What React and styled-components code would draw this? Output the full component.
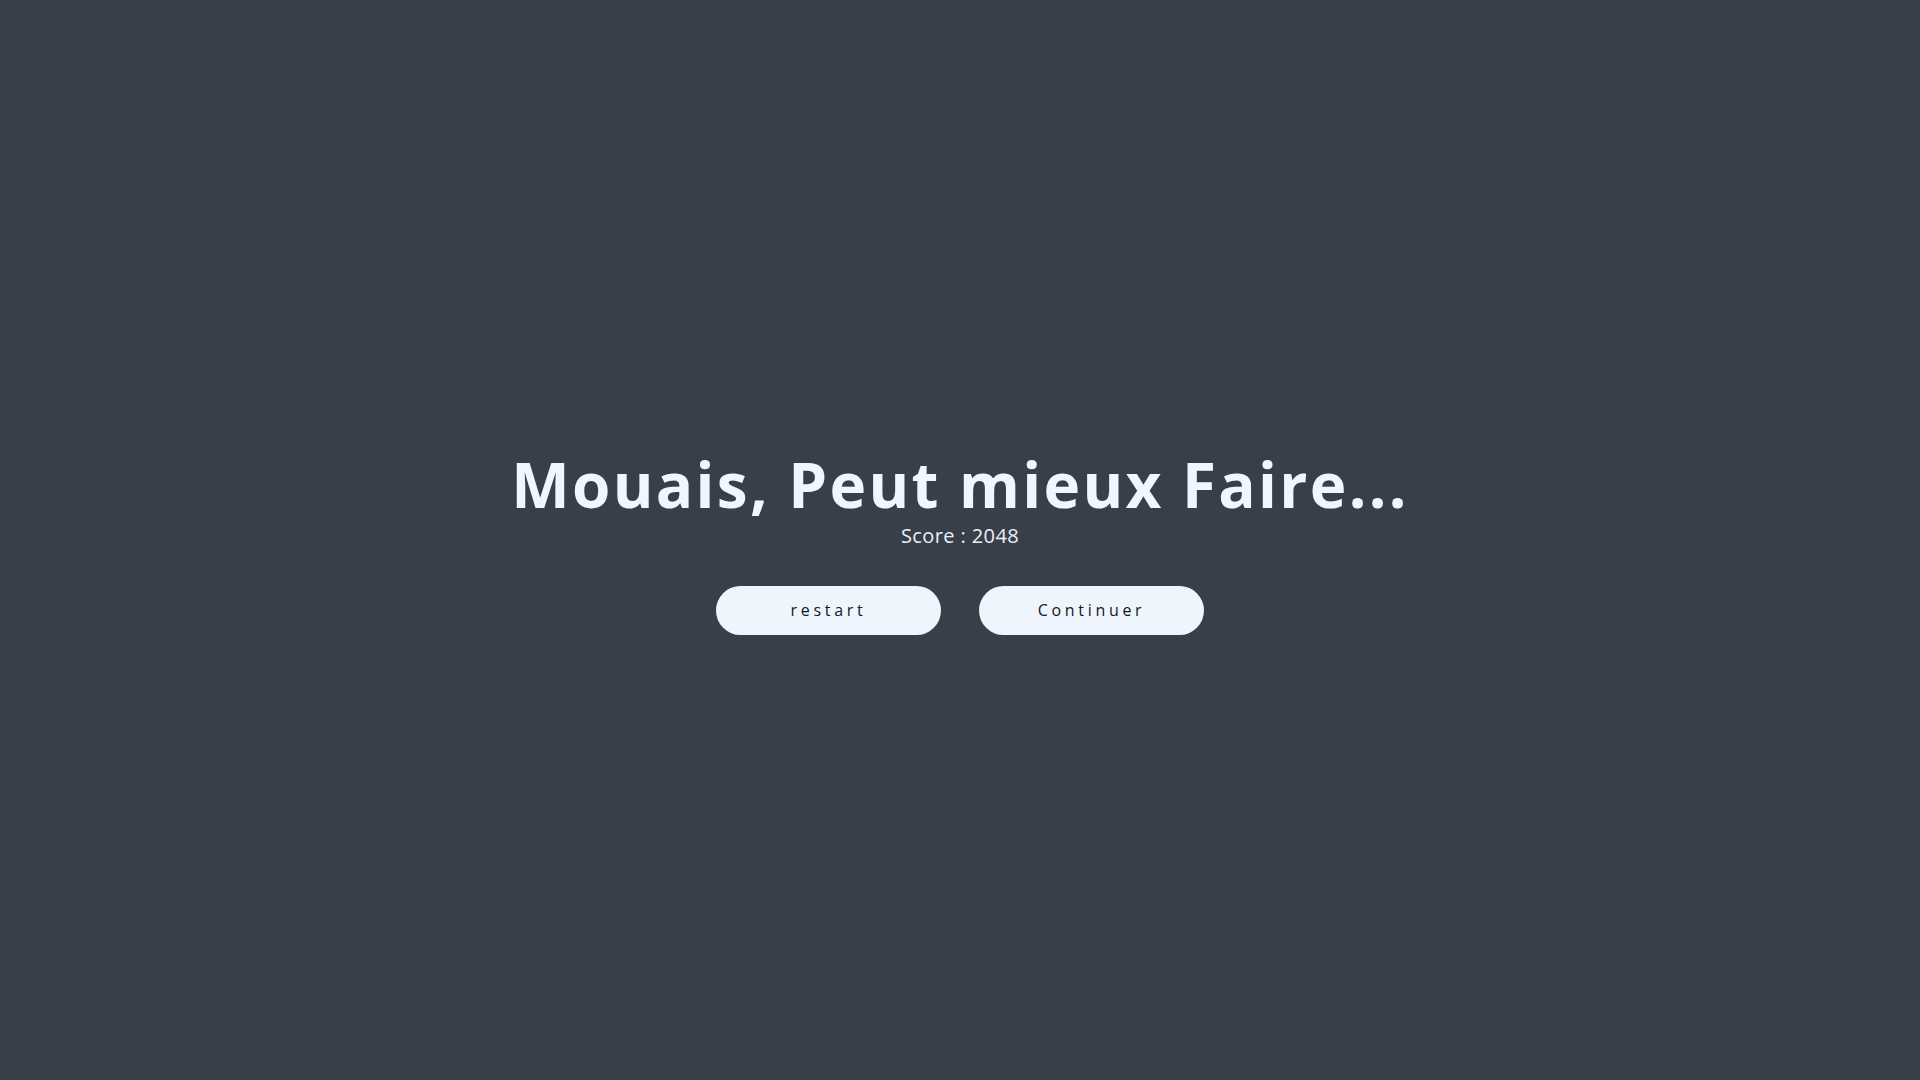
import React from 'react';
import styled, { createGlobalStyle } from 'styled-components';

const GlobalStyle = createGlobalStyle`
  html, body {
    margin: 0;
    padding: 0;
    background: #383f48;
  }
  body {
    font-family: "Open Sans", "DejaVu Sans", sans-serif;
  }
`;

const Screen = styled.div`
  min-height: 100vh;
  display: flex;
  flex-direction: column;
  align-items: center;
  justify-content: center;
  background: #383f48;
  color: #eff6ff;
`;

const Title = styled.h1`
  margin: 0;
  font-family: "Open Sans", sans-serif;
  font-weight: 700;
  font-size: 62px;
  line-height: 1.26;
  letter-spacing: 2.3px;
`;

const Score = styled.p`
  margin: 0;
  font-family: "Open Sans", sans-serif;
  font-weight: 400;
  font-size: 20px;
  line-height: 1.2;
  letter-spacing: 0.4px;
  color: #e9f0f8;
`;

const Actions = styled.div`
  display: flex;
  gap: 38px;
  margin-top: 38px;
`;

const Button = styled.button`
  width: 225px;
  height: 49px;
  border: none;
  border-radius: 25px;
  background: #eef5fd;
  color: #15181c;
  font-family: "Open Sans", sans-serif;
  font-size: 16px;
  letter-spacing: 3.7px;
  cursor: pointer;
  padding: 0;
  :hover {
    background: #ffffff;
  }
`;

class App extends React.PureComponent {
  render() {
    return (
      <Screen>
        <GlobalStyle />
        <Title>Mouais, Peut mieux Faire...</Title>
        <Score>Score : 2048</Score>
        <Actions>
          <Button>restart</Button>
          <Button>Continuer</Button>
        </Actions>
      </Screen>
    );
  }
}

export default App;
